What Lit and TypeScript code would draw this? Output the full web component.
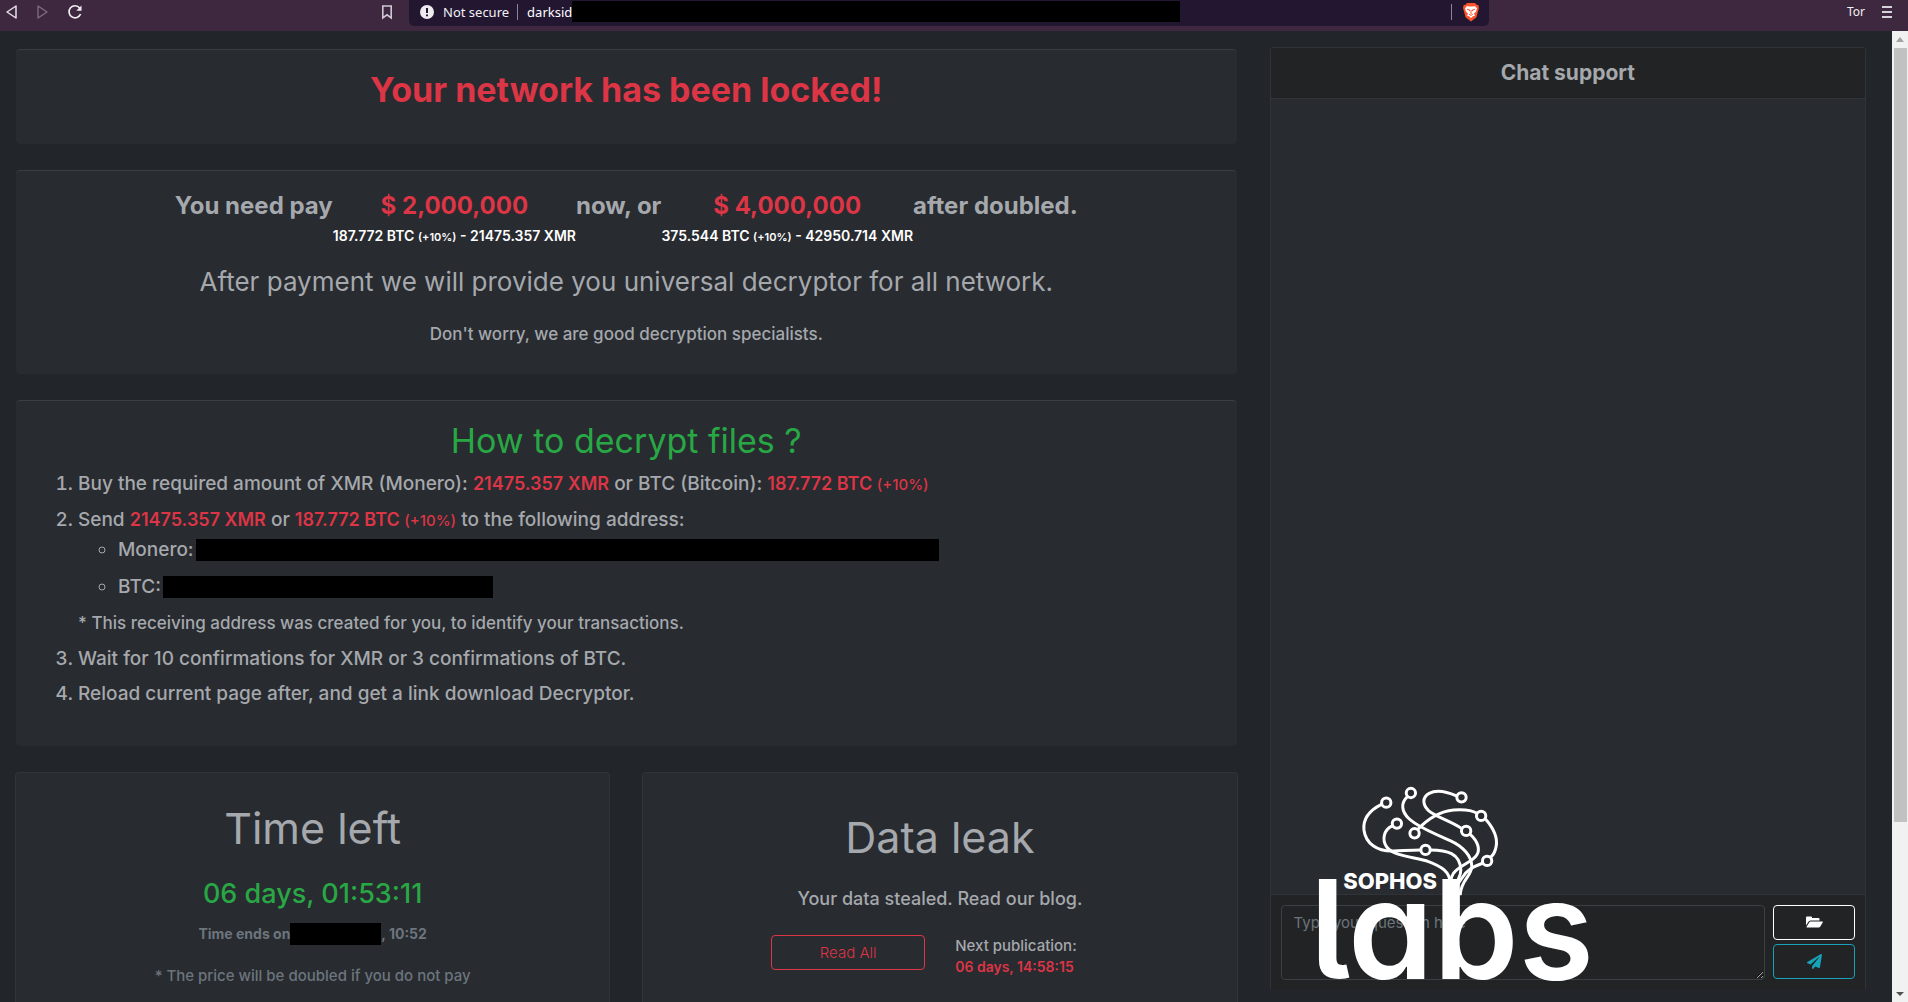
import { LitElement, html, css, svg } from "lit";
import { customElement } from "lit/decorators.js";

const NODES = [
  [378, 98], [452, 69], [604, 82], [663, 138], [410, 161],
  [463, 190], [618, 183], [496, 240], [681, 273],
];

const STRANDS = [
  "M364 103 C325 122 308 150 311 180 C316 220 350 245 400 243 C430 242 455 240 481 240",
  "M511 240 C560 240 600 250 602 300 C603 325 585 330 582 376",
  "M396 168 C370 180 364 210 380 232 C400 260 470 262 505 275 C545 290 568 305 571 340 L571 376",
  "M441 81 C420 100 425 125 445 145 C470 170 530 195 570 212 C610 230 635 260 635 290 C634 320 602 330 600 376",
  "M589 78 C560 65 530 58 507 70 C485 82 487 105 505 122 C525 140 575 155 605 176",
  "M473 178 C495 155 530 125 580 120 C610 118 635 120 650 130",
  "M676 147 C705 180 712 210 708 230 C705 245 700 255 692 262",
  "M630 193 C655 215 660 240 650 255 C640 275 600 285 580 310 C570 325 570 340 568 376",
  "M667 280 C640 290 620 300 605 325 C590 345 588 355 586 376",
];

@customElement("browser-bar")
export class BrowserBar extends LitElement {
  static styles = css`
    :host {
      display: flex;
      height: 31px;
      background: #3e2840;
      color: #f2f0f4;
      font-family: "Noto Sans", "Open Sans", sans-serif;
      font-size: 13px;
      font-weight: 400;
      line-height: 20px;
    }
    button {
      border: 0;
      padding: 0;
      background: none;
      color: inherit;
      font: inherit;
      display: flex;
    }
    svg { display: block; }
    .nav {
      box-sizing: border-box;
      width: 409px;
      height: 24px;
      padding: 0 16px 0 5px;
      display: flex;
      align-items: center;
      gap: 17px;
    }
    .mark { margin-left: auto; }
    .address {
      flex: 1;
      height: 26px;
      border-radius: 0 0 5px 5px;
      background: #231631;
      display: flex;
      align-items: center;
      padding: 0 9px 3px 11px;
      box-sizing: border-box;
    }
    .secure { margin: 0 8px 0 9px; }
    .line { width: 1px; height: 16px; background: #8d8597; }
    .host { margin-left: 9px; color: #fff; }
    .hidden { width: 608px; height: 21px; background: #000; }
    .shield { margin-left: auto; display: flex; align-items: center; gap: 10px; }
    .tail {
      box-sizing: border-box;
      width: 419px;
      height: 24px;
      display: flex;
      justify-content: flex-end;
      align-items: center;
      gap: 16px;
      padding-right: 15px;
      font-size: 12px;
    }
  `;

  render() {
    return html`
      <div class="nav">
        <button aria-label="Back">
          <svg width="14" height="16" viewBox="0 0 14 16" fill="none" stroke="#e4dfe6" stroke-width="1.5" stroke-linejoin="round"><path d="M11 2v12L2 8z" /></svg>
        </button>
        <button aria-label="Forward">
          <svg width="14" height="16" viewBox="0 0 14 16" fill="none" stroke="#806c84" stroke-width="1.3" stroke-linejoin="round"><path d="M2 2v12l9-6z" /></svg>
        </button>
        <button aria-label="Reload">
          <svg width="16" height="16" viewBox="0 0 16 16" fill="none" stroke="#f0edf2" stroke-width="1.7"><path d="M12.7 4A6 6 0 1 0 13.6 10" /><path d="M14.5 1.5v5.2H9.3z" fill="#f0edf2" stroke="none" /></svg>
        </button>
        <button class="mark" aria-label="Bookmark">
          <svg width="12" height="16" viewBox="0 0 12 16" fill="none" stroke="#cfc8d2" stroke-width="1.6"><path d="M1.8 2h8.4v12L6 10.8 1.8 14z" /></svg>
        </button>
      </div>
      <div class="address">
        <svg width="14" height="14" viewBox="0 0 14 14"><circle cx="7" cy="7" r="7" fill="#eeebf0" /><path d="M7 3v5M7 9.5v1.8" stroke="#231631" stroke-width="2" /></svg>
        <span class="secure">Not secure</span>
        <span class="line"></span>
        <span class="host">darksid</span>
        <span class="hidden"></span>
        <span class="shield">
          <span class="line"></span>
          <svg width="18" height="20" viewBox="0 0 18 20">
            <path d="M5 1h8l1.5 1.7 1.8.3.7 3-.6 2-2 7.2L9 19.4l-5.400-4.200L1.600 8 1 6l.7-3 1.800-.3z" fill="#fb542b" />
            <path d="M5 4l2 .5h4L13 4l2 2.500-1 3-2 2 1 2-2.500 1L9 16l-1.500-1.500L5 13.500l1-2-2-2-1-3z" fill="#fff" />
            <path d="M5 7.200l2.700.8-.4 1.200M13 7.200l-2.700.8.4 1.200M9 8v4M7.200 12.400L9 13.300l1.800-.9" fill="none" stroke="#fb542b" stroke-width="1" />
          </svg>
        </span>
      </div>
      <div class="tail">
        <span>Tor</span>
        <button aria-label="Menu">
          <svg width="12" height="14" viewBox="0 0 12 14" stroke="#d8d2da" stroke-width="2"><path d="M1 2h10M1 7h10M1 12h10" /></svg>
        </button>
      </div>
    `;
  }
}

@customElement("chat-panel")
export class ChatPanel extends LitElement {
  static styles = css`
    :host {
      display: flex;
      flex-direction: column;
      border: 1px solid #303337;
      border-bottom: 0;
      border-radius: 3px 3px 0 0;
      background: #282b30;
      box-sizing: border-box;
      margin-bottom: 13px;
    }
    h2 {
      margin: 0;
      padding: 12px;
      background: #212324;
      border-bottom: 1px solid #303337;
      text-align: center;
      font-size: 21px;
      line-height: 26px;
      font-weight: 700;
    }
    .log { flex: 1; }
    form {
      display: flex;
      gap: 8px;
      padding: 10px 10px 9px;
      border-top: 1px solid #303337;
      background: #212324;
    }
    label { flex: 1; display: flex; }
    textarea {
      flex: 1;
      box-sizing: border-box;
      height: 75px;
      padding: 6px 12px;
      border: 1px solid #3d4043;
      border-radius: 4px;
      background: transparent;
      color: #aaa;
      font-family: inherit;
      font-size: 15px;
      line-height: 21px;
    }
    textarea::placeholder { color: #6c757d; opacity: 1; }
    .actions { display: flex; flex-direction: column; gap: 4px; }
    button {
      width: 82px;
      height: 35px;
      padding: 0;
      border: 1px solid currentColor;
      border-radius: 4px;
      background: none;
      display: flex;
      align-items: center;
      justify-content: center;
    }
    .file { color: #fff; }
    .send { color: #17a2b8; }
  `;

  render() {
    return html`
      <h2>Chat support</h2>
      <div class="log"></div>
      <form>
        <label><textarea aria-label="Message" placeholder="Type your question here"></textarea></label>
        <div class="actions">
          <button class="file" type="button" aria-label="Attach file">
            <svg width="17" height="13" viewBox="0 0 17 13" fill="currentColor"><path d="M0 9.500V1.500Q0 .5 1 .5H5Q6 .5 6 1.500V2H12.500Q13.500 2 13.500 3V4.500H5Q3.500 4.500 2.600 5.600Z" /><path d="M4.600 5.500H16.300Q17.300 5.500 16.700 6.400L14.300 10.600Q13.800 11.500 12.700 11.500H1.200Q.2 11.500.8 10.600L3.200 6.400Q3.700 5.500 4.600 5.500Z" /></svg>
          </button>
          <button class="send" type="button" aria-label="Send">
            <svg width="15" height="15" viewBox="0 0 512 512" fill="currentColor"><path d="M476 3.200L12.500 270.600c-18.100 10.400-15.800 35.600 2.200 43.200L121 358.400l287.300-253.200c5.500-4.900 13.300 2.600 8.600 8.300L176 407v80.500c0 23.600 28.500 32.900 42.500 15.800L282 426l124.600 52.200c14.200 6 30.400-2.900 33-18.200l72-432C515 7.800 493.300-6.800 476 3.200z" /></svg>
          </button>
        </div>
      </form>
    `;
  }
}

@customElement("labs-logo")
export class LabsLogo extends LitElement {
  static styles = css`
    :host { display: block; }
    svg { display: block; width: 100%; overflow: visible; }
    .strand { fill: none; stroke: #fff; stroke-width: 9; }
    .node { fill: none; stroke: #fff; stroke-width: 9; }
    .brand {
      fill: #fff;
      font: 800 66px Inter, sans-serif;
    }
    .word {
      fill: #fff;
      font: 600 411px Inter, sans-serif;
      font-feature-settings: "cv11", "cv05";
    }
  `;

  render() {
    return html`
      <svg viewBox="170 45 820 595" role="img" aria-label="Sophos labs">
        ${STRANDS.map((d) => svg`<path class="strand" d=${d} />`)}
        ${NODES.map(([x, y]) => svg`<circle class="node" cx=${x} cy=${y} r="14" />`)}
        <text class="brand" x="249" y="358">SOPHOS</text>
        <text class="word" x="148" y="628">labs</text>
      </svg>
    `;
  }
}

@customElement("app-root")
export class AppRoot extends LitElement {
  static styles = css`
    :host {
      display: flex;
      flex-direction: column;
      position: relative;
      height: 100vh;
      overflow: hidden;
      background: #222529;
      color: #a5a8ac;
      font-family: Inter, "Noto Sans", sans-serif;
      font-weight: 500;
      font-size: 17px;
      line-height: 24px;
    }
    h1, h2, p, ol, ul { margin: 0; font-weight: inherit; }
    .view { flex: 1; min-height: 0; display: flex; }
    .page {
      flex: 1;
      min-width: 0;
      display: grid;
      grid-template-columns: 41fr 20fr;
      gap: 32px;
      padding: 16px 26px 0 15px;
      overflow: hidden;
    }
    .left {
      display: flex;
      flex-direction: column;
      gap: 26px;
      min-width: 0;
      min-height: 0;
      padding-top: 2px;
    }
    .card {
      flex: none;
      margin: 0 1px;
      border-top: 1px solid #3a3d41;
      border-radius: 4px;
      background: #282b30;
    }
    .locked {
      padding: 20px 20px 34px;
      color: #dc3545;
      text-align: center;
      font-size: 34px;
      line-height: 40px;
      font-weight: 700;
    }
    .pay { padding: 19px 20px 28px; text-align: center; }
    .prices {
      display: flex;
      justify-content: center;
      font-size: 24px;
      line-height: 32px;
      font-weight: 700;
    }
    .sum { color: #dc3545; }
    .coins {
      display: block;
      color: #fff;
      font-size: 14px;
      line-height: 28px;
      font-weight: 600;
    }
    .coins small { font-size: 11px; }
    .after { margin-top: 15px; font-size: 26px; line-height: 32px; font-weight: 400; }
    .worry { margin-top: 24px; }
    .how { padding: 20px 20px 39px; }
    .how h2 {
      margin-bottom: 1px;
      color: #28a745;
      text-align: center;
      font-size: 34px;
      line-height: 40px;
      font-weight: 400;
    }
    ol { padding-left: 42px; font-size: 19px; line-height: 27px; }
    .step { padding-top: 8px; }
    .red { color: #dc3545; font-weight: 600; }
    .step .red { font-size: 18px; }
    .red small { font-size: 15px; font-weight: 500; }
    ul { padding-left: 40px; list-style: circle; }
    .addr { line-height: 27px; padding-top: 10px; }
    .addr:first-child { padding-top: 2px; }
    .row { display: flex; align-items: center; gap: 2px; }
    .hidden { background: #000; height: 22px; }
    .xmr { width: 743px; }
    .btc { width: 330px; }
    .date { width: 91px; }
    .note { display: block; padding-top: 10px; font-size: 17px; }
    .pair { display: grid; grid-template-columns: 1fr 1fr; gap: 32px; flex: 1; min-height: 0; }
    .box {
      border: 1px solid #303337;
      border-bottom: 0;
      border-radius: 4px 4px 0 0;
      background: #282b30;
      text-align: center;
      padding: 30px 20px 0;
    }
    .big { font-size: 43px; line-height: 50px; font-weight: 400; }
    .clock { margin-top: 24px; color: #28a745; font-size: 27px; line-height: 34px; }
    .ends {
      display: flex;
      justify-content: center;
      align-items: center;
      margin-top: 12px;
      color: #6c757d;
      font-size: 14px;
      line-height: 22px;
      font-weight: 700;
    }
    .muted { margin-top: 20px; color: #6c757d; font-size: 15px; line-height: 22px; }
    .leak { padding-top: 39px; }
    .blog { margin-top: 25px; font-size: 18px; }
    .next {
      display: flex;
      justify-content: center;
      gap: 30px;
      margin-top: 24px;
      padding-right: 32px;
      text-align: left;
      font-size: 15px;
      line-height: 21px;
      font-weight: 500;
    }
    .next .red { font-size: 14px; }
    .read {
      width: 154px;
      height: 35px;
      border: 1px solid #dc3545;
      border-radius: 4px;
      background: none;
      color: #dc3545;
      font: 300 15px Inter, sans-serif;
    }
    .scroll {
      width: 16px;
      background: #f1f1f1;
      display: flex;
      flex-direction: column;
      align-items: center;
    }
    .scroll svg { flex: none; }
    .thumb { flex: 774; width: 13px; background: #c1c1c1; }
    .rest { flex: 163; }
    labs-logo {
      position: absolute;
      right: 318px;
      bottom: 19px;
      width: 273px;
    }
  `;

  render() {
    return html`
      <browser-bar></browser-bar>
      <div class="view">
        <main class="page">
          <div class="left">
            <h1 class="card locked">Your network has been locked!</h1>
            <section class="card pay">
              <div class="prices">
                <span>You need pay</span>
                <span class="sum">$ 2,000,000
                  <span class="coins">187.772 BTC <small>(+10%)</small> - 21475.357 XMR</span>
                </span>
                <span>now, or</span>
                <span class="sum">$ 4,000,000
                  <span class="coins">375.544 BTC <small>(+10%)</small> - 42950.714 XMR</span>
                </span>
                <span>after doubled.</span>
              </div>
              <p class="after">After payment we will provide you universal decryptor for all network.</p>
              <p class="worry">Don't worry, we are good decryption specialists.</p>
            </section>
            <section class="card how">
              <h2>How to decrypt files ?</h2>
              <ol>
                <li class="step">Buy the required amount of XMR (Monero): <span class="red">21475.357 XMR</span> or BTC (Bitcoin): <span class="red">187.772 BTC <small>(+10%)</small></span></li>
                <li class="step">Send <span class="red">21475.357 XMR</span> or <span class="red">187.772 BTC <small>(+10%)</small></span> to the following address:
                  <ul>
                    <li class="addr"><div class="row">Monero:<span class="hidden xmr"></span></div></li>
                    <li class="addr"><div class="row">BTC:<span class="hidden btc"></span></div></li>
                  </ul>
                  <span class="note">* This receiving address was created for you, to identify your transactions.</span>
                </li>
                <li class="step">Wait for 10 confirmations for XMR or 3 confirmations of BTC.</li>
                <li class="step">Reload current page after, and get a link download Decryptor.</li>
              </ol>
            </section>
            <div class="pair">
              <section class="box">
                <h2 class="big">Time left</h2>
                <p class="clock">06 days, 01:53:11</p>
                <p class="ends">Time ends on<span class="hidden date"></span>, 10:52</p>
                <p class="muted">* The price will be doubled if you do not pay</p>
              </section>
              <section class="box leak">
                <h2 class="big">Data leak</h2>
                <p class="blog">Your data stealed. Read our blog.</p>
                <div class="next">
                  <button class="read" type="button">Read All</button>
                  <div>Next publication:<br /><span class="red">06 days, 14:58:15</span></div>
                </div>
              </section>
            </div>
          </div>
          <chat-panel></chat-panel>
        </main>
        <div class="scroll">
          <svg width="16" height="17" viewBox="0 0 16 17"><path d="M4 11l4-5 4 5z" fill="#a3a3a3" /></svg>
          <div class="thumb"></div>
          <div class="rest"></div>
          <svg width="16" height="17" viewBox="0 0 16 17"><path d="M4 7l4 4 4-4z" fill="#505050" /></svg>
        </div>
      </div>
      <labs-logo></labs-logo>
    `;
  }
}
